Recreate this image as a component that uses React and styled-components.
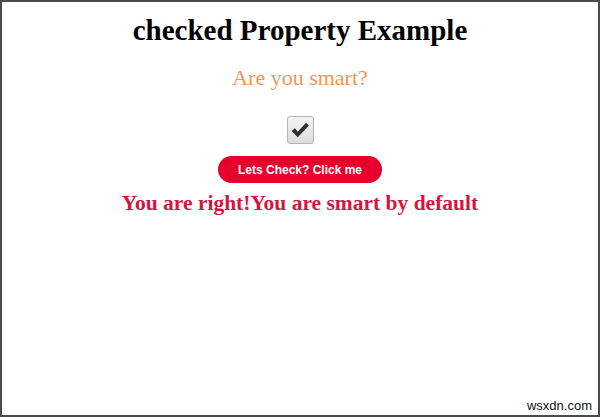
import React from 'react'
import styled, { createGlobalStyle } from 'styled-components'

// GLOBAL
const GlobalStyle = createGlobalStyle`
  html, body {
    margin: 0;
    padding: 0;
    background: #fff;
  }
  body {
    font-family: "Liberation Serif", "Times New Roman", serif;
  }
`

// STYLES
const Frame = styled.div`
  box-sizing: border-box;
  width: 600px;
  height: 417px;
  border: 2px solid #4a4a4a;
  display: flex;
  flex-direction: column;
  align-items: center;
  position: relative;
  overflow: hidden;
`

const Title = styled.h1`
  margin: 12px 0 0;
  font-size: 29px;
  font-weight: bold;
  color: #000;
`

const Question = styled.p`
  margin: 18px 0 0;
  font-size: 22px;
  color: #f0955a;
`

const CheckBox = styled.div`
  box-sizing: border-box;
  margin-top: 25px;
  width: 27px;
  height: 28px;
  border: 1px solid #b4b4b4;
  border-radius: 3px;
  background: linear-gradient(#f4f4f4, #dcdcdc);
  display: flex;
  align-items: center;
  justify-content: center;
`

const Button = styled.button`
  margin-top: 12px;
  width: 164px;
  height: 27px;
  border: none;
  border-radius: 14px;
  background: #e8002d;
  color: #fff;
  font-family: "Liberation Sans", Arial, sans-serif;
  font-weight: bold;
  font-size: 12px;
  padding: 0;
`

const Result = styled.div`
  margin-top: 8px;
  font-size: 21.5px;
  font-weight: bold;
  color: #d71440;
`

const Watermark = styled.span`
  position: absolute;
  right: 6px;
  bottom: 2px;
  font-family: "Liberation Sans", Arial, sans-serif;
  font-size: 13px;
  color: #111;
`

// TEMPLATE
const App = () => (
  <>
    <GlobalStyle />
    <Frame>
      <Title>checked Property Example</Title>
      <Question>Are you smart?</Question>
      <CheckBox>
        <svg width="20" height="18" viewBox="0 0 18 16">
          <path d="M1.5 9 L4.5 6.5 L7 9.5 L14.5 1.5 L17 4 L7 14.5 Z" fill="#2e2e2e" />
        </svg>
      </CheckBox>
      <Button>Lets Check? Click me</Button>
      <Result>You are right!You are smart by default</Result>
      <Watermark>wsxdn.com</Watermark>
    </Frame>
  </>
)

export default App
